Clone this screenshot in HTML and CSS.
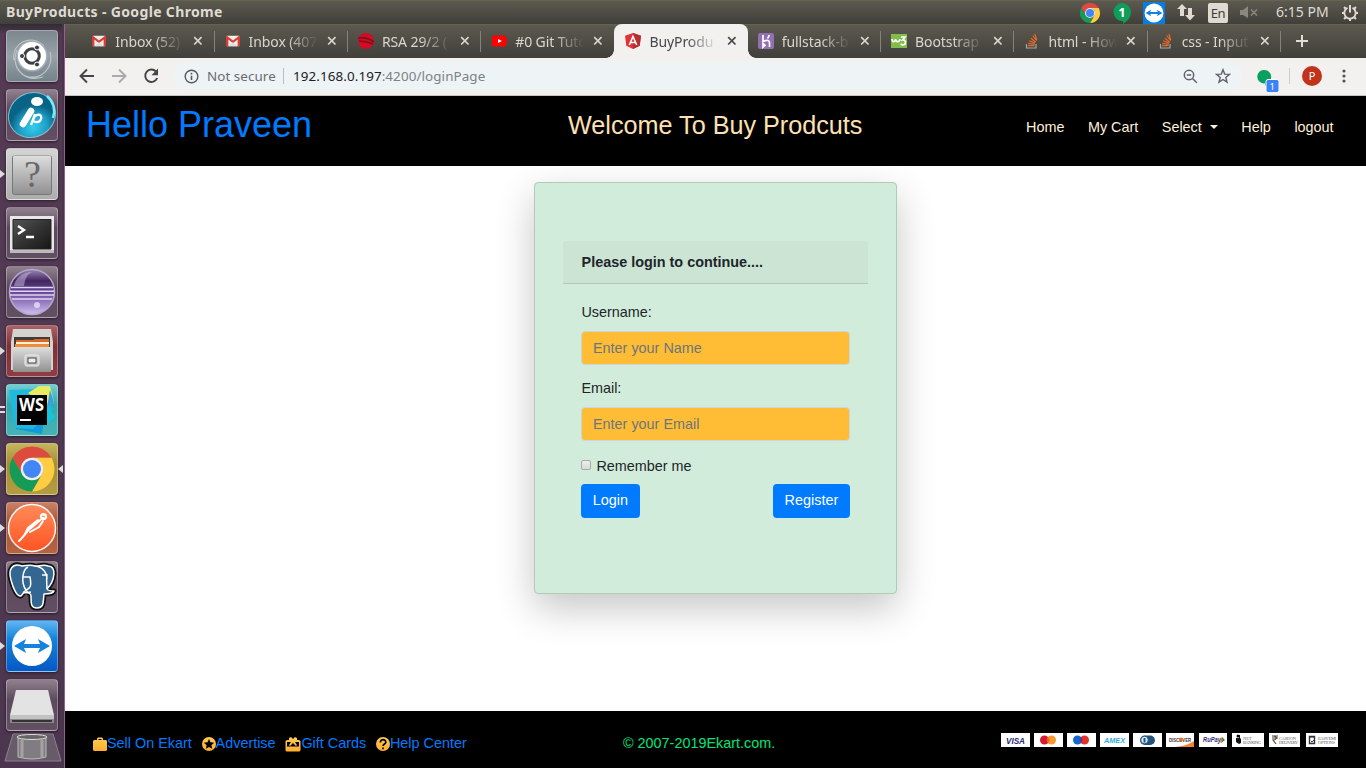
FILE: index.html
```html
<!DOCTYPE html>
<html lang="en">
<head>
<meta charset="utf-8">
<title>BuyProducts</title>
<link rel="stylesheet" href="styles.css">
</head>
<body>
<svg class="defs" aria-hidden="true">
  <defs>
    <linearGradient id="gold" x1="0" y1="0" x2="0" y2="1"><stop offset="0" stop-color="#ffcc50"/><stop offset="1" stop-color="#ffad30"/></linearGradient>
    <linearGradient id="metal" x1="0" y1="0" x2="0" y2="1"><stop offset="0" stop-color="#dedede"/><stop offset="1" stop-color="#909090"/></linearGradient>
    <linearGradient id="dark" x1="0" y1="0" x2="1" y2="1"><stop offset="0" stop-color="#555"/><stop offset=".5" stop-color="#333"/><stop offset="1" stop-color="#161616"/></linearGradient>
    <radialGradient id="aqua" cx=".4" cy=".75"><stop offset="0" stop-color="#35cdec"/><stop offset=".6" stop-color="#1e9dc3"/><stop offset="1" stop-color="#096386"/></radialGradient>
    <linearGradient id="violet" x1="0" y1="0" x2="0" y2="1"><stop offset="0" stop-color="#9a86b8"/><stop offset=".25" stop-color="#43265f"/><stop offset=".5" stop-color="#65459a"/><stop offset="1" stop-color="#d0bff0"/></linearGradient>
    <linearGradient id="flame" x1="0" y1="0" x2="0" y2="1"><stop offset="0" stop-color="#ff8b5a"/><stop offset="1" stop-color="#ff5322"/></linearGradient>
    <symbol id="chrome" viewBox="0 0 48 48">
      <path fill="#dd4b3e" d="M24 2a22 22 0 0 1 19.05 11H24a11 11 0 0 0-9.5 16.5L4.95 13A22 22 0 0 1 24 2z"/>
      <path fill="#ffcd42" d="M43.05 13A22 22 0 0 1 24 46l9.5-16.5A11 11 0 0 0 24 13z"/>
      <path fill="#159b57" d="M4.95 13A22 22 0 0 0 24 46l9.5-16.5a11 11 0 0 1-19 0z"/>
      <circle cx="24" cy="24" r="11" fill="#eee"/><circle cx="24" cy="24" r="8.800" fill="#4285f4"/>
    </symbol>
    <symbol id="gmail" viewBox="0 0 16 12"><path fill="#eee" d="M1 0h14v12H1z"/><path fill="#d93e35" d="M1 0l7 5.500L15 0h1v12h-2.700V4.300L8 8.500 2.700 4.300V12H0V0z"/><path d="M3 12l5-5 5 5z" fill="#ddd"/></symbol>
    <symbol id="stack" viewBox="0 0 16 16"><path d="M2.500 11v4h9.500v-4" fill="none" stroke="#aaa7a2" stroke-width="1.200"/><path d="M4 12.700h6.500M4.200 10.400l6.400.9M5.200 7.700l5.800 2.400M7 5.200l4.700 4M8.800 2.600l3.800 5M10.800 1l2 6" stroke="#e4692b" stroke-width="1.200"/></symbol>
    <symbol id="close" viewBox="0 0 10 10"><path d="M1.200 1.200l7.300 7.300M8.500 1.200L1.200 8.500" stroke="currentColor" stroke-width="1.700" fill="none"/></symbol>
    <symbol id="tv" viewBox="0 0 52 52"><circle cx="26" cy="26" r="20" fill="#fff"/><path fill="#1583dd" d="M8 26l12-7-2 5h16l-2-5 12 7-12 7 2-5H18l2 5z"/></symbol>
  </defs>
</svg>
<div class="desktop">
  <header class="panel">
    <span class="window-title">BuyProducts - Google Chrome</span>
    <div class="tray">
      <svg class="t-chrome" width="22" height="22"><use href="#chrome"/></svg>
      <svg class="t-hang" width="18" height="22" viewBox="0 0 18 22"><path fill="#0f9d58" d="M9 1a9 9 0 0 1 9 9c0 6-4 9-8 12v-3A9 9 0 1 1 9 1z"/><text x="5.300" y="14.500" fill="#fff" class="badge-text">1</text></svg>
      <svg class="t-tv" width="22" height="22" viewBox="0 0 52 52"><path fill="#087ddd" d="M0 0h52v52H0z"/><use href="#tv" x="-3" y="-3" width="58" height="58"/></svg>
      <svg class="t-net" width="18" height="17" viewBox="0 0 18 17"><path fill="#dfdbd2" d="M5 0l5 5H7v7H3V5H0zM11 4h4v7h3l-5 5.500L8 11h3z"/></svg>
      <span class="lang">En</span>
      <svg class="t-vol" width="18" height="13" viewBox="0 0 18 13"><path fill="#8a8780" d="M0 4h3l5-4v12L3 9H0z"/><path d="M11 3.500l6 6M17 3.500l-6 6" stroke="#8a8780" stroke-width="1.600"/></svg>
      <span class="clock">6:15 PM</span>
      <svg class="t-gear" width="18" height="18" viewBox="0 0 18 18"><path d="M6.500 3.900A5.700 5.700 0 1 0 11.500 3.900" fill="none" stroke="#dfdbd2" stroke-width="1.900"/><path d="M9 1v7.500M9 14.500V17M1 9h2.500M14.500 9H17M3 3l2 2M15 3l-2 2M3 15l2-2M15 15l-2-2" stroke="#dfdbd2" stroke-width="2"/></svg>
    </div>
  </header>
  <div class="workspace">
    <aside class="launcher">
      <div class="app slate"><svg viewBox="0 0 52 52"><path d="M8 30c-3-17 17-27 30-14M20 46c15 5 28-8 24-24M37 47C17 53 4 36 11 20" fill="none" stroke="#bdc3c7" stroke-width="1.200"/><circle cx="26" cy="26" r="15.500" fill="#a9b0b5"/><circle cx="26" cy="26" r="14" fill="#fff"/><circle cx="26" cy="26" r="7.300" fill="none" stroke="#3b4045" stroke-width="3"/><g fill="#3b4045" stroke="#fff" stroke-width="1"><circle cx="16" cy="26" r="2.500"/><circle cx="31" cy="17.500" r="2.500"/><circle cx="31" cy="34.500" r="2.500"/></g></svg></div>
      <div class="app plum"><svg viewBox="0 0 52 52"><ellipse cx="26" cy="26" rx="24" ry="22" transform="rotate(-30 26 26)" fill="url(#aqua)" stroke="#83bacb"/><path d="M41 7c8 7 8 16 6 22" fill="none" stroke="#72efff" stroke-width="2.500"/><ellipse cx="31" cy="12.500" rx="6" ry="4.500" fill="#fff"/><path d="M25 22l-8 13" stroke="#fff" stroke-width="6.500" stroke-linecap="round"/><path d="M29 25l-4 11M27 32c1-8 10-8 8-2-1 4-7 4-8 1" stroke="#fff" stroke-width="2.300" fill="none"/></svg></div>
      <div class="app silver"><i class="run"></i><svg viewBox="0 0 52 52"><rect x="6.500" y="7.500" width="39" height="39" rx="2" fill="url(#metal)" stroke="#777"/><path d="M7 8h38" stroke="#ddd"/><text x="18" y="39" class="question">?</text></svg></div>
      <div class="app plum"><svg viewBox="0 0 52 52"><path fill="#e8e8e8" d="M4 9h44v36H4z"/><path fill="#bbb" d="M4 43h44v3H4z"/><path fill="url(#dark)" stroke="#222" d="M7 12.500h38V42H7z"/><path d="M12 19l6 4-6 4M20 30h8" stroke="#fff" stroke-width="2.300" fill="none"/></svg></div>
      <div class="app plum"><svg viewBox="0 0 52 52"><circle cx="26" cy="26" r="22.500" fill="url(#violet)" stroke="#b5a6cc" stroke-width="1.500"/><path d="M8 20c1-7 8-14 18-14-6 3-7 8-8 14z" fill="#cdbde0" opacity=".5"/><path d="M5 21.500h42M4 25.200h44M4 29h44M6 33h40" stroke="#e0d5f0" stroke-width="1.500"/><circle cx="31" cy="39" r="3" fill="#fff" opacity=".6"/></svg></div>
      <div class="app wine"><i class="run"></i><svg viewBox="0 0 52 52"><path fill="#d3d3d0" d="M7 4h38l2 13v28H5V17z"/><path fill="#403d3a" d="M8 12h36v12H8z"/><path fill="#d9662b" d="M10 15h17l2-1h14v8H10z"/><path fill="#fff1d2" d="M10 17h33v3H10z"/><path fill="#ed8d38" d="M9 19h34v4H9z"/><path fill="url(#metal)" d="M7 22h38v25H7z"/><rect x="19" y="30" width="14" height="11" rx="2" fill="#ccc" stroke="#eee"/><rect x="22" y="33" width="8" height="5" fill="#eee" stroke="#444"/></svg></div>
      <div class="app teal"><i class="dots"></i><svg viewBox="0 0 52 52"><path fill="#1299d9" d="M8 30l30 6-2 14-26-5z"/><path fill="#1fb9e0" d="M3 6l30-1 14 20-20 20-18-1z"/><path fill="#e8ea62" d="M22 9l11-7h11l4 16-8 4z"/><path fill="#3a9fe0" d="M44 6l4 12-7 5z"/><path fill="#14c6dd" d="M40 20l9 13-12 10z"/><path d="M11 11h30v30H11z"/><path d="M14 36h11" stroke="#fff" stroke-width="2"/><text x="13" y="27" textLength="25" lengthAdjust="spacingAndGlyphs" class="ws">WS</text></svg></div>
      <div class="app khaki"><i class="run"></i><i class="focus"></i><svg viewBox="0 0 52 52"><use href="#chrome" x="1.500" y="1.500" width="49" height="49"/></svg></div>
      <div class="app rust"><i class="run"></i><svg viewBox="0 0 52 52"><circle cx="26" cy="26" r="23.500" fill="url(#flame)" stroke="#fff" stroke-width="1.400"/><circle cx="37.500" cy="14.500" r="3.600" fill="#fff"/><path d="M35 17.500l-14 12M37 19l-4 6-9 5M32 18l-10 8-3 6M21 30l-6 7-2 2" stroke="#fff" stroke-width="2" stroke-linecap="round" fill="none"/><path d="M36 14l3 1" stroke="#ff7042"/></svg></div>
      <div class="app plum"><svg viewBox="0 0 52 52"><g fill="#336791" stroke="#111" stroke-width="5" stroke-linejoin="round"><path d="M16 5C6 1 2 9 5 19c2 8 6 17 10 16l5-6c2 5 5 2 5 6 0 8 0 12 6 12 7 0 6-5 7-14 4 0 9 0 10-3-3 0-6 0-7-2 8-8 10-23 1-23-5-2-10 1-13 0-5-2-9 0-13 0z"/><path stroke="#fff" stroke-width="1.500" d="M16 5C6 1 2 9 5 19c2 8 6 17 10 16l5-6c2 5 5 2 5 6 0 8 0 12 6 12 7 0 6-5 7-14 4 0 9 0 10-3-3 0-6 0-7-2 8-8 10-23 1-23-5-2-10 1-13 0-5-2-9 0-13 0z"/></g><path d="M20 29c-5-7-4-20 2-23M20 29c6-2 5-7 4-13h-7M36 14h5c-1 6 0 9 0 14M29 5c9 1 12 8 12 13M17 31c4 2 5 0 8 0" fill="none" stroke="#fff" stroke-width="1.500"/></svg></div>
      <div class="app azure"><i class="run"></i><svg viewBox="0 0 52 52"><use href="#tv"/></svg></div>
      <div class="app plum"><svg viewBox="0 0 52 52"><path fill="#888" d="M4 37h44v7H4z"/><path fill="#e3e3e3" d="M10 11h32l6 25H4z"/><path fill="#c2c2c2" d="M4 36h44v4H4z"/><path fill="#333" d="M6 41h40v2H6z"/></svg></div>
      <svg class="trash" width="58" height="29" viewBox="0 0 58 29"><path d="M9 1h40l8 27H1z" fill="#685b69" stroke="#8c818f"/><path fill="#817c81" stroke="#bbb" d="M14 4h28v20q-14 4-28 0z"/><path d="M18 7v17M38 7v17" stroke="#a5a1a5" stroke-width="3"/><ellipse cx="28" cy="4" rx="15" ry="2.500" fill="#666" stroke="#ddd"/></svg>
    </aside>
    <section class="browser">
      <div class="tabs">
        <div class="tab"><svg class="fav mail"><use href="#gmail"/></svg><span class="name">Inbox (52)</span><svg class="x"><use href="#close"/></svg></div>
        <div class="tab"><svg class="fav mail"><use href="#gmail"/></svg><span class="name">Inbox (407</span><svg class="x"><use href="#close"/></svg></div>
        <div class="tab"><svg class="fav" viewBox="0 0 16 16"><circle cx="8" cy="8" r="8" fill="#d40b22"/><path d="M0 5c6-1 11 0 16 4M1 8c5 0 9 1 14 3" stroke="#71131e" stroke-width="1.500" fill="none"/></svg><span class="name">RSA 29/2 (</span><svg class="x"><use href="#close"/></svg></div>
        <div class="tab last"><svg class="fav" viewBox="0 0 16 16"><rect x="1" y="2.500" width="14.500" height="11" rx="2.500" fill="#f00"/><path fill="#fff" d="M7 6l4 2-4 2z"/></svg><span class="name">#0 Git Tuto</span><svg class="x"><use href="#close"/></svg></div>
        <div class="tab active"><svg class="fav" viewBox="0 0 16 16"><path fill="#e23237" d="M8 0l8 2.700-1.300 10L8 16l-6.700-3.300L0 2.700z"/><path fill="#b52e31" d="M8 0l8 2.700-1.300 10L8 16z"/><path d="M4.300 12L8 3.500l3.700 8.500M5.500 9.500h5" fill="none" stroke="#fff" stroke-width="1.600"/></svg><span class="name">BuyProdu</span><svg class="x"><use href="#close"/></svg></div>
        <div class="tab"><svg class="fav" viewBox="0 0 16 16"><rect width="16" height="16" rx="2" fill="#9370b2"/><path d="M5 2v6.500c5-2 6.500-1 6.500 1V14M11 2q0 2-1.500 3.500M5 10.500l2 1.700L5 14z" fill="none" stroke="#fff" stroke-width="1.700"/></svg><span class="name">fullstack-b</span><svg class="x"><use href="#close"/></svg></div>
        <div class="tab"><svg class="fav" viewBox="0 0 16 16"><path fill="#82bd49" d="M0 1h16v14H0z"/><path d="M1 6c0 3.500 3.200 3.500 3.500 0 .3 3.500 4 3.500 4.500 0M10 4h4l-2.500 3c4-.5 4 5 0 5l-2-1" fill="none" stroke="#fff" stroke-width="1.700"/></svg><span class="name">Bootstrap</span><svg class="x"><use href="#close"/></svg></div>
        <div class="tab"><svg class="fav"><use href="#stack"/></svg><span class="name">html - How</span><svg class="x"><use href="#close"/></svg></div>
        <div class="tab"><svg class="fav"><use href="#stack"/></svg><span class="name">css - Input</span><svg class="x"><use href="#close"/></svg></div>
        <svg class="plus" width="14" height="14" viewBox="0 0 14 14"><path d="M7 1v12M1 7h12" stroke="#e0ddd5" stroke-width="2"/></svg>
      </div>
      <div class="toolbar">
        <svg class="back" width="16" height="16" viewBox="0 0 16 16"><path d="M15 8H2M8 1.500L1.500 8 8 14.500" fill="none" stroke="#454545" stroke-width="1.900"/></svg>
        <svg class="fwd" width="16" height="16" viewBox="0 0 16 16"><path d="M1 8h13M8 1.500L14.500 8 8 14.500" fill="none" stroke="#aaa" stroke-width="1.900"/></svg>
        <svg class="reload" width="16" height="16" viewBox="0 0 16 16"><path d="M13 3.500A6.200 6.200 0 1 0 14.200 10" fill="none" stroke="#454545" stroke-width="1.900"/><path fill="#454545" d="M15 .5v6.700H8.500z"/></svg>
        <div class="address">
          <svg class="info" width="15" height="15" viewBox="0 0 15 15"><circle cx="7.500" cy="7.500" r="6.300" fill="none" stroke="#555a5e" stroke-width="1.400"/><path d="M7.500 6.700V11M7.500 3.700v1.700" stroke="#555a5e" stroke-width="1.600"/></svg>
          <span class="secure">Not secure</span><i class="bar"></i><span class="url"><b>192.168.0.197</b>:4200/loginPage</span>
          <svg class="lens" width="15" height="15" viewBox="0 0 15 15"><circle cx="6" cy="6" r="4.700" fill="none" stroke="#5f6368" stroke-width="1.500"/><path d="M9.500 9.500l4.300 4.300M3.800 6h4.400" stroke="#5f6368" stroke-width="1.500"/></svg>
          <svg class="star" width="16" height="16" viewBox="0 0 16 16"><path d="M8 1.700l1.700 4.400 4.700.3-3.600 3 1.200 4.700L8 11.500l-4 2.600 1.200-4.700-3.600-3 4.700-.3z" fill="none" stroke="#5f6368" stroke-width="1.400"/></svg>
        </div>
        <svg class="hang" width="22" height="22" viewBox="0 0 22 22"><path fill="#08a05e" d="M7.500 0a6.700 6.700 0 0 1 6.700 6.700C14.200 11 11 14 8 16v-2.700A6.700 6.700 0 1 1 7.500 0z"/><rect x="9" y="9.500" width="13" height="13" rx="2" fill="#3b83f2" stroke="#fff"/><text x="12.600" y="20" fill="#fff" class="count">1</text></svg>
        <i class="divider"></i><span class="profile">P</span>
        <svg class="more" width="4" height="14" viewBox="0 0 4 14"><g fill="#555"><circle cx="2" cy="2" r="1.600"/><circle cx="2" cy="7" r="1.600"/><circle cx="2" cy="12" r="1.600"/></g></svg>
      </div>
      <main class="page">
        <nav class="navbar">
          <h1>Hello Praveen</h1>
          <h2>Welcome To Buy Prodcuts</h2>
          <div class="links"><a>Home</a><a>My Cart</a><a>Select<i class="caret"></i></a><a>Help</a><a>logout</a></div>
        </nav>
        <div class="content">
          <form class="card">
            <div class="card-header">Please login to continue....</div>
            <div class="card-body">
              <label for="name">Username:</label>
              <input class="field" id="name" placeholder="Enter your Name">
              <label for="mail">Email:</label>
              <input class="field" id="mail" placeholder="Enter your Email">
              <div class="remember"><i class="check"></i>Remember me</div>
              <div class="buttons"><button type="button">Login</button><button type="button">Register</button></div>
            </div>
          </form>
        </div>
        <footer class="footer">
          <div class="foot-links">
            <a><svg width="14" height="14" viewBox="0 0 14 14"><path fill="url(#gold)" fill-rule="evenodd" d="M4 3V1.500L5 .5h4l1 1V3h3l1 1v9l-1 1H1l-1-1V4l1-1zm1.500 0h3V2h-3z"/></svg>Sell On Ekart</a>
            <a><svg width="14" height="14" viewBox="0 0 14 14"><circle cx="7" cy="7" r="7" fill="url(#gold)"/><path d="M7 2l1.500 3.300 3.700.4-2.800 2.500.8 3.600L7 10l-3.200 1.800.8-3.600-2.800-2.500 3.700-.4z"/></svg>Advertise</a>
            <a><svg width="16" height="15" viewBox="0 0 16 15"><path fill="url(#gold)" d="M2 3h2V1l2-1 2 2 2-2 2 1v2h2l1.500 1v9.500l-1 1h-13l-1-1V4z"/><path d="M2 5h4L4 8l1 1 3-3 3 3 1-1-2-3h4v4.500H2z"/></svg>Gift Cards</a>
            <a><svg width="14" height="14" viewBox="0 0 14 14"><circle cx="7" cy="7" r="7" fill="url(#gold)"/><path d="M4.300 5.500C4.300 1.500 10 2 9.800 5.200 9.700 7 7.200 7 7 9M7 10.400v1.800" stroke="#000" stroke-width="1.700" fill="none"/></svg>Help Center</a>
          </div>
          <span class="copy">© 2007-2019Ekart.com.</span>
          <svg class="pay" width="338" height="14" viewBox="0 0 338 14">
            <path fill="#fff" d="M0 0h29v14H0zM33 0h29v14H33zM66 0h29v14H66zM99 0h29v14H99zM132 0h29v14H132zM165 0h28v14H165zM198 0h28v14H198zM231 0h32v14H231zM268 0h31v14H268zM305 0h32v14H305z"/>
            <text x="5" y="10.500" textLength="19" lengthAdjust="spacingAndGlyphs" class="brand" fill="#24276e">VISA</text>
            <circle cx="43.500" cy="7" r="4.500" fill="#d71931"/><circle cx="50.500" cy="7" r="4.500" fill="#f59a2d"/><circle cx="76.500" cy="7" r="4.500" fill="#1268cf"/><circle cx="83.500" cy="7" r="4.500" fill="#e2322c"/><path d="M47 4a4.500 4.500 0 0 1 0 6 4.500 4.500 0 0 1 0-6z" fill="#ef641e"/><path d="M80 4a4.500 4.500 0 0 1 0 6 4.500 4.500 0 0 1 0-6z" fill="#563b85"/>
            <text x="103" y="9.700" textLength="21" lengthAdjust="spacingAndGlyphs" class="brand amex">AMEX</text>
            <rect x="139" y="2.500" width="15" height="9.500" rx="4.700" fill="#24527c"/><circle cx="143.500" cy="7" r="3.800" fill="#dceaf0" stroke="#24527c"/><path d="M143.500 5v4.500" stroke="#24527c" stroke-width="2"/>
            <path d="M174 14q12-1 19-6v6z" fill="#f58232"/><text x="168" y="8.500" textLength="22" lengthAdjust="spacingAndGlyphs" class="tiny">DISCOVER</text><circle cx="180" cy="6.500" r="2" fill="#ee7027"/>
            <text x="202" y="9" textLength="18" lengthAdjust="spacingAndGlyphs" class="tiny rupay">RuPay</text><path fill="#138c54" d="M221 4l3 3-4 3z"/><path fill="#ee7b29" d="M220 4l2 3-3 3z"/>
            <path d="M235 5h3V2h1v3l1 1v4l-2 1-3-2z" fill="#111"/><circle cx="237" cy="3" r="1.500"/><text x="242" y="6.800" class="serif">NET</text><text x="242" y="11" textLength="18" class="serif">BANKING</text>
            <path d="M271 3h6M271 5h6M272 3c5 0 4 4 0 4l3 4" fill="none" stroke="#444" stroke-width="1.100"/><path d="M275 3h2" stroke="#f28b29"/><text x="278" y="6.800" textLength="17" class="serif">CASH ON</text><text x="278" y="11" textLength="19" class="serif">DELIVERY</text>
            <path d="M308.500 3.500h5v7h-5z" fill="none" stroke="#333" stroke-width="1.400"/><path d="M308 4h6M310 8l1 1 2-2" stroke="#333" fill="none"/><text x="317" y="6.800" textLength="18" class="serif">EASY EMI</text><text x="317" y="11" textLength="17" class="serif">OPTIONS</text>
          </svg>
        </footer>
      </main>
    </section>
  </div>
</div>
</body>
</html>
```
FILE: styles.css
```css
* { box-sizing: border-box; }
body { margin: 0; font-family: "Liberation Sans", Arial, sans-serif; font-size: 14.4px; color: #212529; }
.defs { position: absolute; width: 0; height: 0; }
.desktop { width: 1366px; height: 768px; display: flex; flex-direction: column; overflow: hidden; }
svg { display: block; flex: none; }

.panel { height: 24px; flex: none; display: flex; justify-content: space-between; align-items: center; padding: 0 7px 0 6px; background: linear-gradient(#5c594f, #403f3a); border-top: 1px solid #65624f; color: #dfdbd2; font-family: "Noto Sans", sans-serif; }
.window-title { font-size: 14px; font-weight: 700; letter-spacing: .35px; line-height: 20px; padding-bottom: 2px; }
.tray { display: flex; align-items: center; }
.t-hang { margin-left: 12px; }
.t-tv { margin-left: 12px; }
.t-net { margin-left: 12px; }
.lang { width: 20px; height: 20px; margin-left: 13px; border-radius: 2px; background: #dfdbd2; color: #3d3c38; font-size: 13px; line-height: 20px; text-align: center; letter-spacing: -0.5px; }
.t-vol { margin-left: 12px; }
.clock { width: 53px; margin-left: 18px; font-size: 14px; line-height: 20px; padding-bottom: 2px; white-space: nowrap; }
.t-gear { margin-left: 12px; }
.badge-text { font: 700 13px "Noto Sans", sans-serif; }

.workspace { flex: 1; display: flex; min-height: 0; }
.launcher { width: 65px; flex: none; display: flex; flex-direction: column; gap: 7px; padding: 6px 0 0 6px; background: linear-gradient(#302b31, #553a54 10px, #513a53 45%, #4c354e); border-right: 1px solid #9b5d91; box-shadow: inset -2px 0 #49344b; }
.app { position: relative; width: 52px; height: 52px; flex: none; border-radius: 4px; border: 1px solid rgba(255,255,255,.3); box-shadow: 0 1px 3px rgba(0,0,0,.5); }
.app > svg { width: 52px; height: 52px; margin: -1px; }
.slate { background: linear-gradient(#7c878e, #98a1a7 50%, #75838b); }
.plum { background: linear-gradient(#91818e, #5c495d 40%, #634f64); }
.silver { background: linear-gradient(#d4d4d4, #adadad); }
.wine { background: linear-gradient(#aa6468, #7e3037 40%, #903c43); }
.teal { background: linear-gradient(#72cdd0, #33a9ae 40%, #45b3b5); }
.khaki { background: linear-gradient(#c7b45d, #a48d34 40%, #b49c42); }
.rust { background: linear-gradient(#ca8165, #a55434 40%, #b66442); }
.azure { background: linear-gradient(#64b5ef, #1584dc 35%, #0758c4); }
.run { position: absolute; left: -7px; top: 21px; border: 4px solid transparent; border-left: 5px solid #ddd; border-right: 0; }
.focus { position: absolute; right: -6px; top: 21px; border: 4px solid transparent; border-right: 5px solid #ddd; border-left: 0; }
.dots { position: absolute; left: -7px; top: 21px; width: 5px; height: 7px; border: solid #ddd; border-width: 2px 0; }
.question { font: 38px "Liberation Serif", serif; fill: #686868; }
.ws { font: 700 17px "Noto Sans", sans-serif; fill: #fff; }
.trash { margin: -5px 0 0 -2px; }

.browser { flex: 1; min-width: 0; display: flex; flex-direction: column; }
.tabs { height: 34px; flex: none; display: flex; align-items: center; padding-left: 15.3px; background: linear-gradient(#5c594f, #403f3a); border-top: 1px solid #65624f; }
.tab { position: relative; width: 133.3px; height: 33px; flex: none; display: flex; align-items: center; padding: 0 0 1px 11px; color: #d9d6ce; font: 14px "Noto Sans", sans-serif; }
.tab::after { content: ""; position: absolute; right: -1px; top: 6px; width: 1px; height: 21px; background: #85827a; }
.tab.last::after, .tab.active::after { display: none; }
.fav { width: 16px; height: 16px; }
.fav.mail { width: 14px; height: 12px; margin: 0 1px; }
.name { width: 69px; margin-left: 8px; white-space: nowrap; letter-spacing: -0.1px; -webkit-mask-image: linear-gradient(90deg, #000 55%, transparent); mask-image: linear-gradient(90deg, #000 55%, transparent); }
.x { width: 10px; height: 10px; margin-left: 9px; }
.tab.active { align-self: flex-end; height: 34px; margin: 0 -1px 0 1px; padding-bottom: 0; color: #48484a; background: #f2f1f0; border-radius: 8px 8px 0 0; }
.active::before { content: ""; position: absolute; left: -8px; right: -8px; bottom: 0; height: 8px; background: radial-gradient(circle at 0 0, transparent 7.5px, #f2f1f0 8px) left / 8px 8px no-repeat, radial-gradient(circle at 100% 0, transparent 7.5px, #f2f1f0 8px) right / 8px 8px no-repeat; }
.active + .tab, .active ~ .tab { left: 0; }
.plus { margin: 0 0 1px 15px; }
.toolbar { height: 38px; flex: none; display: flex; align-items: center; padding: 0 0 1px 14px; background: #f2f1f0; border-bottom: 1px solid #c5c4c2; font-family: "Noto Sans", sans-serif; }
.fwd, .reload { margin-left: 16px; }
.address { width: 1069px; height: 28px; flex: none; margin-left: 14px; padding-left: 11px; display: flex; align-items: center; background: #eef3f5; border-radius: 14px; font-size: 13.4px; }
.secure { width: 70px; margin-left: 8px; color: #686c70; white-space: nowrap; letter-spacing: .07px; }
.bar { width: 1px; height: 16px; margin: 0 9px 0 6px; background: #b9bdbf; }
.url { flex: 1; color: #7b8286; letter-spacing: .1px; }
.url b { color: #202124; font-weight: 400; }
.star { margin: 0 11px 0 17px; }
.hang { margin: 9px 0 0 15px; }
.divider { width: 1px; height: 16px; margin-left: 10px; background: #ccc; }
.profile { width: 20px; height: 20px; margin-left: 12px; border-radius: 50%; background: #c2331b; color: #fff; font-size: 11px; line-height: 20px; text-align: center; }
.more { margin-left: 20px; }
.count { font: 9.5px "Noto Sans", sans-serif; }

.page { flex: 1; min-height: 0; display: flex; flex-direction: column; background: #fff; }
.navbar { height: 70px; flex: none; display: grid; grid-template-columns: 482px 1fr auto; padding: 0 32.4px 0 21px; background: #000; color: #ffe0b2; }
h1, h2 { margin: 0; font-weight: 400; white-space: nowrap; }
h1 { padding-top: 7px; font-size: 36px; line-height: 43px; color: #007bff; }
h2 { padding-top: 14px; font-size: 25.2px; line-height: 30px; }
.links { display: flex; gap: 23.5px; padding-top: 20px; line-height: 22px; color: #fff0d9; }
.caret { display: inline-block; margin-left: 8px; vertical-align: 3px; border: 4.3px solid transparent; border-top-color: #fff0d9; border-bottom: 0; }
.content { flex: 1; min-height: 0; display: flex; justify-content: center; align-items: flex-start; padding-top: 16px; }
.card { width: 363px; height: 412px; padding: 58px 28px 0; border: 1px solid #b1cabb; border-radius: 4px; background: #d1ecdb; box-shadow: 0 14px 38px rgba(0,0,0,.23); }
.card-header { height: 43px; padding: 0 18px 0 18.6px; border-bottom: 1px solid #afcabb; border-radius: 3px 3px 0 0; background: #cbe4d4; font-weight: 700; line-height: 42px; }
.card-body { padding: 17px 18px 0; display: flex; flex-direction: column; }
.card-body label { height: 22px; margin-bottom: 8px; padding-left: .4px; line-height: 22px; }
.field { width: 269px; height: 34px; margin: 0 0 12px; padding: 0 11px; border: 1px solid #ced4da; border-radius: 4px; background: #ffbd36; font: 14.4px "Liberation Sans", sans-serif; }
.field::placeholder { color: #6c757d; opacity: 1; }
.remember { display: flex; align-items: center; height: 22px; margin-top: 2px; }
.check { width: 10px; height: 10px; margin: -2px 5.4px 0 0; border: 1px solid #aaa; border-radius: 2px; background: linear-gradient(#eee, #d9d9d9); }
.buttons { display: flex; justify-content: space-between; margin-top: 7px; }
.buttons button { height: 34px; padding: 0 11.8px 2px; border: 0; border-radius: 4px; background: #007bff; color: #fff; font: 14.4px "Liberation Sans", sans-serif; }
.footer { height: 57px; flex: none; display: grid; grid-template-columns: 530px 1fr auto; padding: 22px 27px 0 28px; background: #000; line-height: 20px; }
.foot-links { display: flex; gap: 9.8px; color: #007bff; }
.foot-links a { display: flex; }
.foot-links svg { margin-top: 4px; }
.copy { color: #00e676; }
.brand { font: italic 700 9px "Liberation Sans", sans-serif; }
.amex { fill: #32acdb; font-size: 8px; }
.tiny { font: 700 5.5px "Liberation Sans", sans-serif; fill: #333; }
.rupay { font-size: 7px; font-style: italic; fill: #322d80; }
.serif { font: 4.5px "Liberation Serif", serif; fill: #666; }
```
